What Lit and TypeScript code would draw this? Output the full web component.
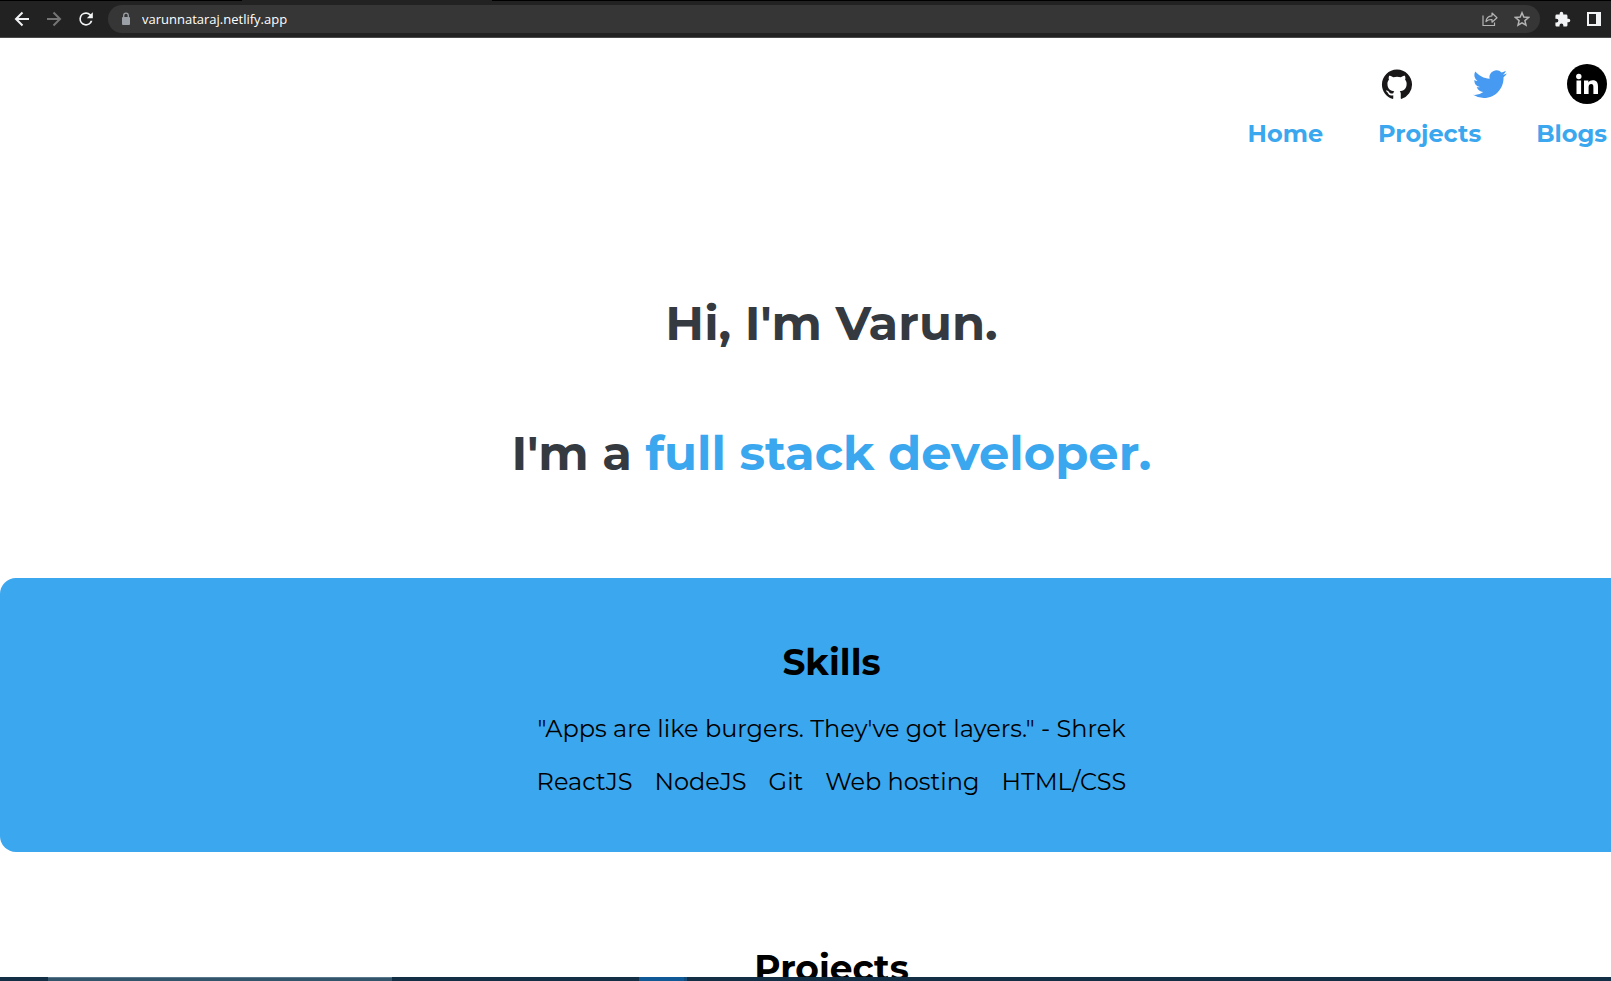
import { LitElement, html, css } from "lit";
import { customElement } from "lit/decorators.js";

@customElement("browser-bar")
class BrowserBar extends LitElement {
  static styles = css`
    :host { display: block; background: #222; font-family: "Open Sans", "Noto Sans", sans-serif; }
    .tabs { display: flex; height: 1px; background: #000; }
    .tab { width: 250px; margin-left: 242px; background: #222; }
    .bar { display: flex; align-items: center; height: 36px; padding: 0 7px 0 12px; border-bottom: 1px solid #4a4a4a; }
    button { display: grid; place-items: center; width: 20px; height: 20px; padding: 0; border: 0; background: none; color: #f1f3f4; }
    button:disabled { color: #757575; }
    .soft { color: #b4b4b4; }
    .nav { display: flex; gap: 12px; margin-right: 12px; }
    .pill { display: flex; flex: 1; align-items: center; height: 28px; padding: 0 8px 0 12px; border-radius: 14px; background: #363636; }
    .lock { margin-right: 10px; color: #9aa0a6; }
    input { flex: 1; min-width: 0; padding: 0; border: 0; outline: 0; background: none; color: #fff; font: 13px/20px "Open Sans", "Noto Sans", sans-serif; }
    .end { display: flex; gap: 12px; margin-left: 12px; }
    .pill .end { margin-left: 0; }
    svg { display: block; }
  `;

  render() {
    return html`
      <div class="tabs"><div class="tab"></div></div>
      <div class="bar">
        <div class="nav">
          <button aria-label="Back"><svg width="18" height="18" viewBox="0 0 18 18" fill="none" stroke="currentColor" stroke-width="2"><path d="M16 9H3M9.500 2.500 3 9l6.500 6.500"/></svg></button>
          <button aria-label="Forward" disabled><svg width="18" height="18" viewBox="0 0 18 18" fill="none" stroke="currentColor" stroke-width="2"><path d="M2 9H15M8.500 2.500 15 9l-6.500 6.500"/></svg></button>
          <button aria-label="Reload"><svg width="20" height="20" viewBox="0 0 24 24" fill="currentColor"><path d="M17.650 6.350A7.950 7.950 0 0 0 12 4a8 8 0 1 0 7.730 10h-2.300A5.900 5.900 0 1 1 12 6.100c1.650 0 3.140.69 4.220 1.780L13 11h7.200V3.800z"/></svg></button>
        </div>
        <label class="pill">
          <svg class="lock" width="12" height="14" viewBox="0 0 12 14"><path fill="currentColor" d="M3 5h6a1 1 0 0 1 1 1v6a1 1 0 0 1-1 1H3a1 1 0 0 1-1-1V6a1 1 0 0 1 1-1z"/><path fill="none" stroke="currentColor" stroke-width="1.300" d="M3.700 5.500V3.500a2.300 2.300 0 0 1 4.600 0v2"/></svg>
          <input aria-label="Address" .value=${"varunnataraj.netlify.app"}>
          <span class="end">
            <button class="soft" aria-label="Share"><svg width="16" height="16" viewBox="0 0 16 16" fill="none" stroke="currentColor" stroke-width="1.200"><path d="M1 4.500v10h11.500v-3"/><path d="M4 10.500c.3-3.500 2.200-5.500 6-5.700V2l5 4.700-5 4.500V8.500c-3-.1-4.700.6-6 2z" stroke-linejoin="round"/></svg></button>
            <button class="soft" aria-label="Bookmark"><svg width="16" height="16" viewBox="0 0 16 16" fill="none" stroke="currentColor" stroke-width="1.500"><path d="m8 1.800 1.800 4.300 4.700.4-3.600 3.100 1.100 4.600L8 11.800l-4 2.400 1.100-4.600-3.600-3.100 4.700-.4z"/></svg></button>
          </span>
        </label>
        <div class="end">
          <button aria-label="Extensions"><svg width="17" height="17" viewBox="0 0 24 24" fill="currentColor"><path d="M20.500 11H19V7a2 2 0 0 0-2-2h-4V3.500a2.500 2.500 0 0 0-5 0V5H4a2 2 0 0 0-2 2v3.800h1.500a2.700 2.700 0 0 1 0 5.400H2V20c0 1.100.9 2 2 2h3.800v-1.500a2.700 2.700 0 0 1 5.400 0V22H17a2 2 0 0 0 2-2v-4h1.500a2.500 2.500 0 0 0 0-5z"/></svg></button>
          <button aria-label="Side panel"><svg width="14" height="14" viewBox="0 0 14 14"><path fill="currentColor" fill-rule="evenodd" d="M0 0h14v14H0zM2 2v10h7V2z"/></svg></button>
        </div>
      </div>
    `;
  }
}

@customElement("app-root")
class AppRoot extends LitElement {
  static styles = css`
    :host { display: flex; flex-direction: column; height: 100vh; overflow: hidden; background: #fff; color: #000; font-family: Montserrat, Inter, sans-serif; }
    .view { flex: 1; min-height: 0; overflow: hidden; }
    .links { display: flex; flex-direction: column; align-items: flex-end; gap: 12px; padding: 26px 4px 0; }
    .social { display: flex; align-items: center; gap: 60px; }
    .menu { display: flex; gap: 55px; font-size: 24px; line-height: 36px; font-weight: 700; }
    a { color: #3ba7ee; text-decoration: none; }
    svg { display: block; }
    .page { margin-right: -52px; text-align: center; }
    h1, h2, p, ul { margin: 0; }
    .intro { display: flex; flex-direction: column; gap: 70px; padding: 141px 0 95px; color: #343a40; }
    h1 { font-size: 48px; line-height: 60px; font-weight: 700; }
    .accent { color: #3ba7ee; }
    .skills { display: flex; flex-direction: column; align-items: center; padding: 62px 0 54px; border-radius: 16px; background: #3ba7ee; }
    h2 { font-size: 36px; line-height: 44px; font-weight: 700; }
    p, ul { font-size: 24px; line-height: 32px; font-weight: 400; }
    p { padding: 29px 0 21px; }
    ul { display: flex; gap: 22px; padding: 0; list-style: none; }
    .projects { padding-top: 94px; }
    .taskbar { display: flex; height: 4px; background: #122f45; }
    .window { width: 344px; margin: 0 247px 0 48px; border-top: 1px solid #5b778a; background: #33556b; box-sizing: border-box; }
    .active { width: 45px; background: #0f5a96; border-right: 3px solid #124a78; }
  `;

  render() {
    return html`
      <browser-bar></browser-bar>
      <div class="view">
        <header class="links">
          <div class="social">
            <a href="#github" aria-label="GitHub"><svg width="32" height="32" viewBox="-0.500 -0.800 17 17" fill="#191717"><path d="M8 0C3.580 0 0 3.580 0 8c0 3.540 2.290 6.530 5.470 7.590.4.070.55-.17.55-.38 0-.19-.01-.82-.01-1.490-2.010.37-2.530-.49-2.690-.94-.09-.23-.48-.94-.82-1.130-.28-.15-.68-.52-.01-.53.63-.01 1.080.58 1.230.82.72 1.210 1.870.87 2.330.66.070-.52.28-.87.51-1.070-1.780-.2-3.640-.89-3.640-3.950 0-.87.31-1.590.82-2.150-.08-.2-.36-1.020.08-2.120 0 0 .67-.21 2.200.82.64-.18 1.320-.27 2-.27s1.360.09 2 .27c1.530-1.040 2.200-.82 2.200-.82.44 1.100.16 1.920.08 2.120.51.56.82 1.270.82 2.150 0 3.070-1.870 3.750-3.650 3.950.29.25.54.73.54 1.480 0 1.070-.01 1.930-.01 2.200 0 .21.15.46.55.38A8.010 8.010 0 0 0 16 8c0-4.420-3.580-8-8-8z"/></svg></a>
            <a href="#twitter" aria-label="Twitter"><svg width="34" height="32" viewBox="0 0.900 24 22" fill="#469af2"><path d="M23.950 4.570a10 10 0 0 1-2.820.77 4.960 4.960 0 0 0 2.160-2.720c-.95.55-2 .95-3.130 1.180a4.920 4.920 0 0 0-8.380 4.480C7.690 8.090 4.070 6.130 1.640 3.160a4.920 4.920 0 0 0 1.520 6.570 4.900 4.900 0 0 1-2.230-.61v.06a4.920 4.920 0 0 0 3.950 4.830 5 5 0 0 1-2.210.08 4.940 4.940 0 0 0 4.600 3.420A9.870 9.870 0 0 1 0 19.540a14 14 0 0 0 7.550 2.210c9.050 0 14-7.500 14-13.980 0-.21 0-.42-.02-.63a9.940 9.940 0 0 0 2.420-2.570z"/></svg></a>
            <a href="#linkedin" aria-label="LinkedIn"><svg width="40" height="40" viewBox="0 0 40 40"><circle cx="20" cy="20" r="20"/><g fill="#fff"><circle cx="11.800" cy="12.500" r="2.700"/><path d="M9.500 16.500h4.600V30H9.500zM17 16.500h4.400v1.900c.8-1.400 2.300-2.200 4.300-2.200 4.200 0 5.300 2.600 5.300 6.400V30h-4.600v-6.500c0-1.900-.2-3.400-2.200-3.400-2.100 0-2.600 1.500-2.600 3.400V30H17z"/></g></svg></a>
          </div>
          <nav class="menu"><a href="#home">Home</a><a href="#projects">Projects</a><a href="#blogs">Blogs</a></nav>
        </header>
        <main class="page">
          <section class="intro">
            <h1>Hi, I'm Varun.</h1>
            <h1>I'm a <span class="accent">full stack developer.</span></h1>
          </section>
          <section class="skills">
            <h2>Skills</h2>
            <p>"Apps are like burgers. They've got layers." - Shrek</p>
            <ul><li>ReactJS</li><li>NodeJS</li><li>Git</li><li>Web hosting</li><li>HTML/CSS</li></ul>
          </section>
          <section class="projects" id="projects"><h2>Projects</h2></section>
        </main>
      </div>
      <footer class="taskbar"><div class="window"></div><div class="active"></div></footer>
    `;
  }
}
